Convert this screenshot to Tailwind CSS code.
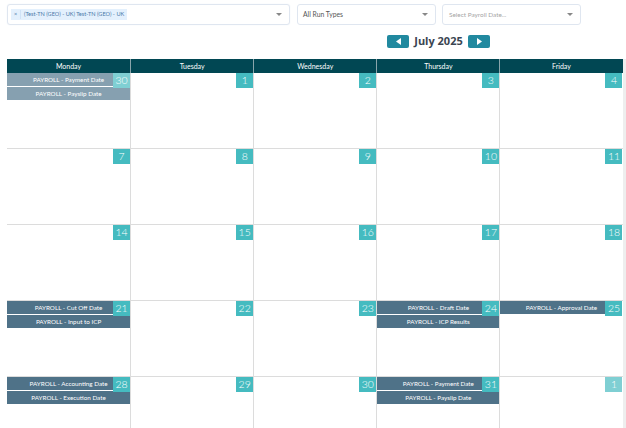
<!DOCTYPE html>
<html lang="en" class="overflow-hidden">
<head>
<meta charset="UTF-8">
<title>Payroll Calendar</title>
<script src="https://cdn.jsdelivr.net/npm/@tailwindcss/browser@4"></script>
</head>
<body class="bg-white font-['Lato',sans-serif] w-[626px] h-[428px] overflow-hidden">

<!-- Filters -->
<div class="flex pl-[7px] pt-[4px] h-[35px] items-start">
  <div class="w-[283px] h-[21px] border border-[#dfe6f0] rounded-[3px] flex items-center pl-[3px] pr-[7px] shadow-[0_0_1px_#dfe6f0]">
    <div class="h-[11px] bg-[#e3f0fd] flex items-center text-[5.6px] text-[#4a78a8] whitespace-nowrap">
      <span class="w-[10px] text-center border-r border-[#cfe2f7]">×</span>
      <span class="px-[3px]">(Test-TN (GEO) - UK) Test-TN (GEO) - UK</span>
    </div>
    <span class="ml-auto w-0 h-0 border-x-[3px] border-x-transparent border-t-[3px] border-t-[#888]"></span>
  </div>
  <div class="ml-[7px] w-[139px] h-[21px] border border-[#dfe6f0] rounded-[3px] flex items-center pl-[5px] pr-[7px] text-[6.8px] text-[#555]">
    All Run Types
    <span class="ml-auto w-0 h-0 border-x-[3px] border-x-transparent border-t-[3px] border-t-[#888]"></span>
  </div>
  <div class="ml-[6px] w-[139px] h-[21px] border border-[#dfe6f0] rounded-[3px] flex items-center pl-[6px] pr-[7px] text-[6.4px] text-[#a5a5a5]">
    Select Payroll Date...
    <span class="ml-auto w-0 h-0 border-x-[3px] border-x-transparent border-t-[3px] border-t-[#888]"></span>
  </div>
</div>

<!-- Month navigation -->
<div class="flex items-center h-[13px] mb-[11px] pl-[387px]">
  <button class="w-[22px] h-[13px] bg-[#21899f] rounded-[2px] flex items-center justify-center">
    <svg width="5" height="7" viewBox="0 0 5 7"><path d="M5 0v7L0 3.5z" fill="#fff"/></svg>
  </button>
  <span class="w-[59px] text-center text-[11px] font-bold font-['Open_Sans',sans-serif] text-[#3a4552] whitespace-nowrap">July 2025</span>
  <button class="w-[22px] h-[13px] bg-[#21899f] rounded-[2px] flex items-center justify-center">
    <svg width="5" height="7" viewBox="0 0 5 7"><path d="M0 0v7l5-3.5z" fill="#fff"/></svg>
  </button>
</div>

<!-- Calendar -->
<div class="flex h-[369px] overflow-hidden">
  <div class="ml-[7px] w-[615.5px]">
    <div class="grid grid-cols-5 h-[14px] bg-[#014753] text-white text-[7px]">
      <div class="flex items-center justify-center">Monday</div>
      <div class="flex items-center justify-center border-l border-[#8aa5ab]">Tuesday</div>
      <div class="flex items-center justify-center border-l border-[#8aa5ab]">Wednesday</div>
      <div class="flex items-center justify-center border-l border-[#8aa5ab]">Thursday</div>
      <div class="flex items-center justify-center border-l border-[#8aa5ab]">Friday</div>
    </div>
    <div id="weeks"></div>
  </div>
  <div class="w-[3.5px] bg-[#eeeeee]"></div>
</div>

<script>
  // Each day: [day number, faded, events]
  const weeks = [
    [[30, true, ['Payment Date', 'Payslip Date']], [1], [2], [3], [4]],
    [[7], [8], [9], [10], [11]],
    [[14], [15], [16], [17], [18]],
    [[21, false, ['Cut Off Date', 'Input to ICP']], [22], [23], [24, false, ['Draft Date', 'ICP Results']], [25, false, ['Approval Date']]],
    [[28, false, ['Accounting Date', 'Execution Date']], [29], [30], [31, false, ['Payment Date', 'Payslip Date']], [1, true]]
  ];

  const html = weeks.map(week => {
    const cells = week.map(([day, faded, events], i) => {
      const list = (events || []).map(ev => `
        <div class="h-[13px] mb-[1px] flex items-center justify-center text-white text-[6.3px] whitespace-nowrap ${faded ? 'bg-[#86a0b0]' : 'bg-[#4f7288]'}">PAYROLL - ${ev}</div>`).join('');
      return `<div class="relative ${i ? 'border-l border-[#dcdcdc]' : ''}">
        ${list}
        <span class="absolute top-0 right-0 w-[17px] h-[15px] flex items-center justify-center text-white text-[10.5px] font-light ${faded ? 'bg-[#7fcfd3]' : 'bg-[#45bbc0]'}">${day}</span>
      </div>`;
    }).join('');
    return `<div class="grid grid-cols-5 h-[76px] border-b border-[#dcdcdc]">${cells}</div>`;
  }).join('');
  document.getElementById('weeks').innerHTML = html;
</script>
</body>
</html>
